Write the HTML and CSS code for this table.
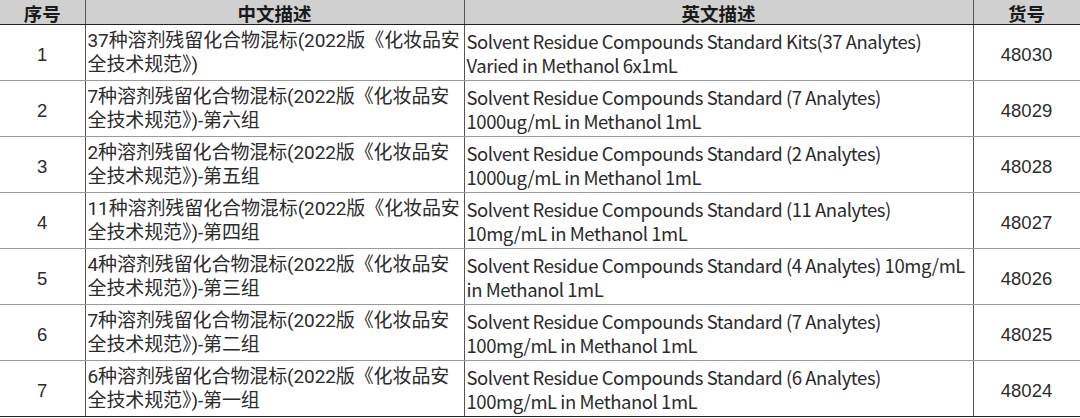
FILE: index.html
```html
<!DOCTYPE html>
<html lang="zh">
<head>
<meta charset="utf-8">
<title>溶剂残留化合物混标</title>
<link rel="stylesheet" href="styles.css">
</head>
<body>
<table class="grid">
  <colgroup>
    <col class="c-no"><col class="c-cn"><col class="c-en"><col class="c-id">
  </colgroup>
  <thead>
    <tr><th>序号</th><th>中文描述</th><th>英文描述</th><th>货号</th></tr>
  </thead>
  <tbody>
    <tr><td class="num">1</td><td class="txt cn">37种溶剂残留化合物混标(2022版《化妆品安<br>全技术规范》)</td><td class="txt en">Solvent Residue Compounds Standard Kits(37 Analytes)<br>Varied in Methanol 6x1mL</td><td class="num">48030</td></tr>
    <tr><td class="num">2</td><td class="txt cn">7种溶剂残留化合物混标(2022版《化妆品安<br>全技术规范》)-第六组</td><td class="txt en">Solvent Residue Compounds Standard (7 Analytes)<br>1000ug/mL in Methanol 1mL</td><td class="num">48029</td></tr>
    <tr><td class="num">3</td><td class="txt cn">2种溶剂残留化合物混标(2022版《化妆品安<br>全技术规范》)-第五组</td><td class="txt en">Solvent Residue Compounds Standard (2 Analytes)<br>1000ug/mL in Methanol 1mL</td><td class="num">48028</td></tr>
    <tr><td class="num">4</td><td class="txt cn">11种溶剂残留化合物混标(2022版《化妆品安<br>全技术规范》)-第四组</td><td class="txt en">Solvent Residue Compounds Standard (11 Analytes)<br>10mg/mL in Methanol 1mL</td><td class="num">48027</td></tr>
    <tr><td class="num">5</td><td class="txt cn">4种溶剂残留化合物混标(2022版《化妆品安<br>全技术规范》)-第三组</td><td class="txt en">Solvent Residue Compounds Standard (4 Analytes) 10mg/mL<br>in Methanol 1mL</td><td class="num">48026</td></tr>
    <tr><td class="num">6</td><td class="txt cn">7种溶剂残留化合物混标(2022版《化妆品安<br>全技术规范》)-第二组</td><td class="txt en">Solvent Residue Compounds Standard (7 Analytes)<br>100mg/mL in Methanol 1mL</td><td class="num">48025</td></tr>
    <tr><td class="num">7</td><td class="txt cn">6种溶剂残留化合物混标(2022版《化妆品安<br>全技术规范》)-第一组</td><td class="txt en">Solvent Residue Compounds Standard (6 Analytes)<br>100mg/mL in Methanol 1mL</td><td class="num">48024</td></tr>
  </tbody>
</table>
</body>
</html>
```

FILE: styles.css
```css
html, body {
  margin: 0;
  padding: 0;
  background: #ffffff;
}

.grid {
  border-collapse: collapse;
  table-layout: fixed;
  width: 1080px;
  font-family: "Noto Sans CJK SC", "Noto Sans", sans-serif;
  font-size: 18.5px;
  color: #2b2b2b;
}

.c-no { width: 85px; }
.c-cn { width: 379px; }
.c-en { width: 509px; }
.c-id { width: 107px; }

.grid th {
  height: 24px;
  padding: 3px 0 0 0;
  box-sizing: border-box;
  line-height: 21px;
  background: #d0d0d0;
  font-weight: bold;
  color: #1a1a1a;
  text-align: center;
  border-left: 1px solid #555;
  border-bottom: 1px solid #222;
  white-space: nowrap;
}

.grid th:first-child { border-left: none; }
.grid th:last-child,
.grid td:last-child { border-right: 1px solid #222; }

.grid td {
  height: 56px;
  box-sizing: border-box;
  padding: 0;
  vertical-align: middle;
  border-left: 1px solid #555;
  border-bottom: 1px solid #9a9a9a;
  white-space: nowrap;
  overflow: hidden;
}

.grid td:first-child { border-left: none; }
.grid tbody tr:last-child td { border-bottom: 1px solid #222; }

.txt {
  line-height: 24px;
  padding: 0 0 0 2px !important;
  text-align: left;
}

.cn {
  font-family: Roboto, "Noto Sans CJK SC", sans-serif;
  font-size: 19px;
  letter-spacing: -0.1px;
}

.en {
  letter-spacing: -0.45px;
}

.num {
  font-family: "Liberation Sans", Arial, sans-serif;
  text-align: center;
  line-height: 24px;
  padding-top: 4px !important;
}
```
